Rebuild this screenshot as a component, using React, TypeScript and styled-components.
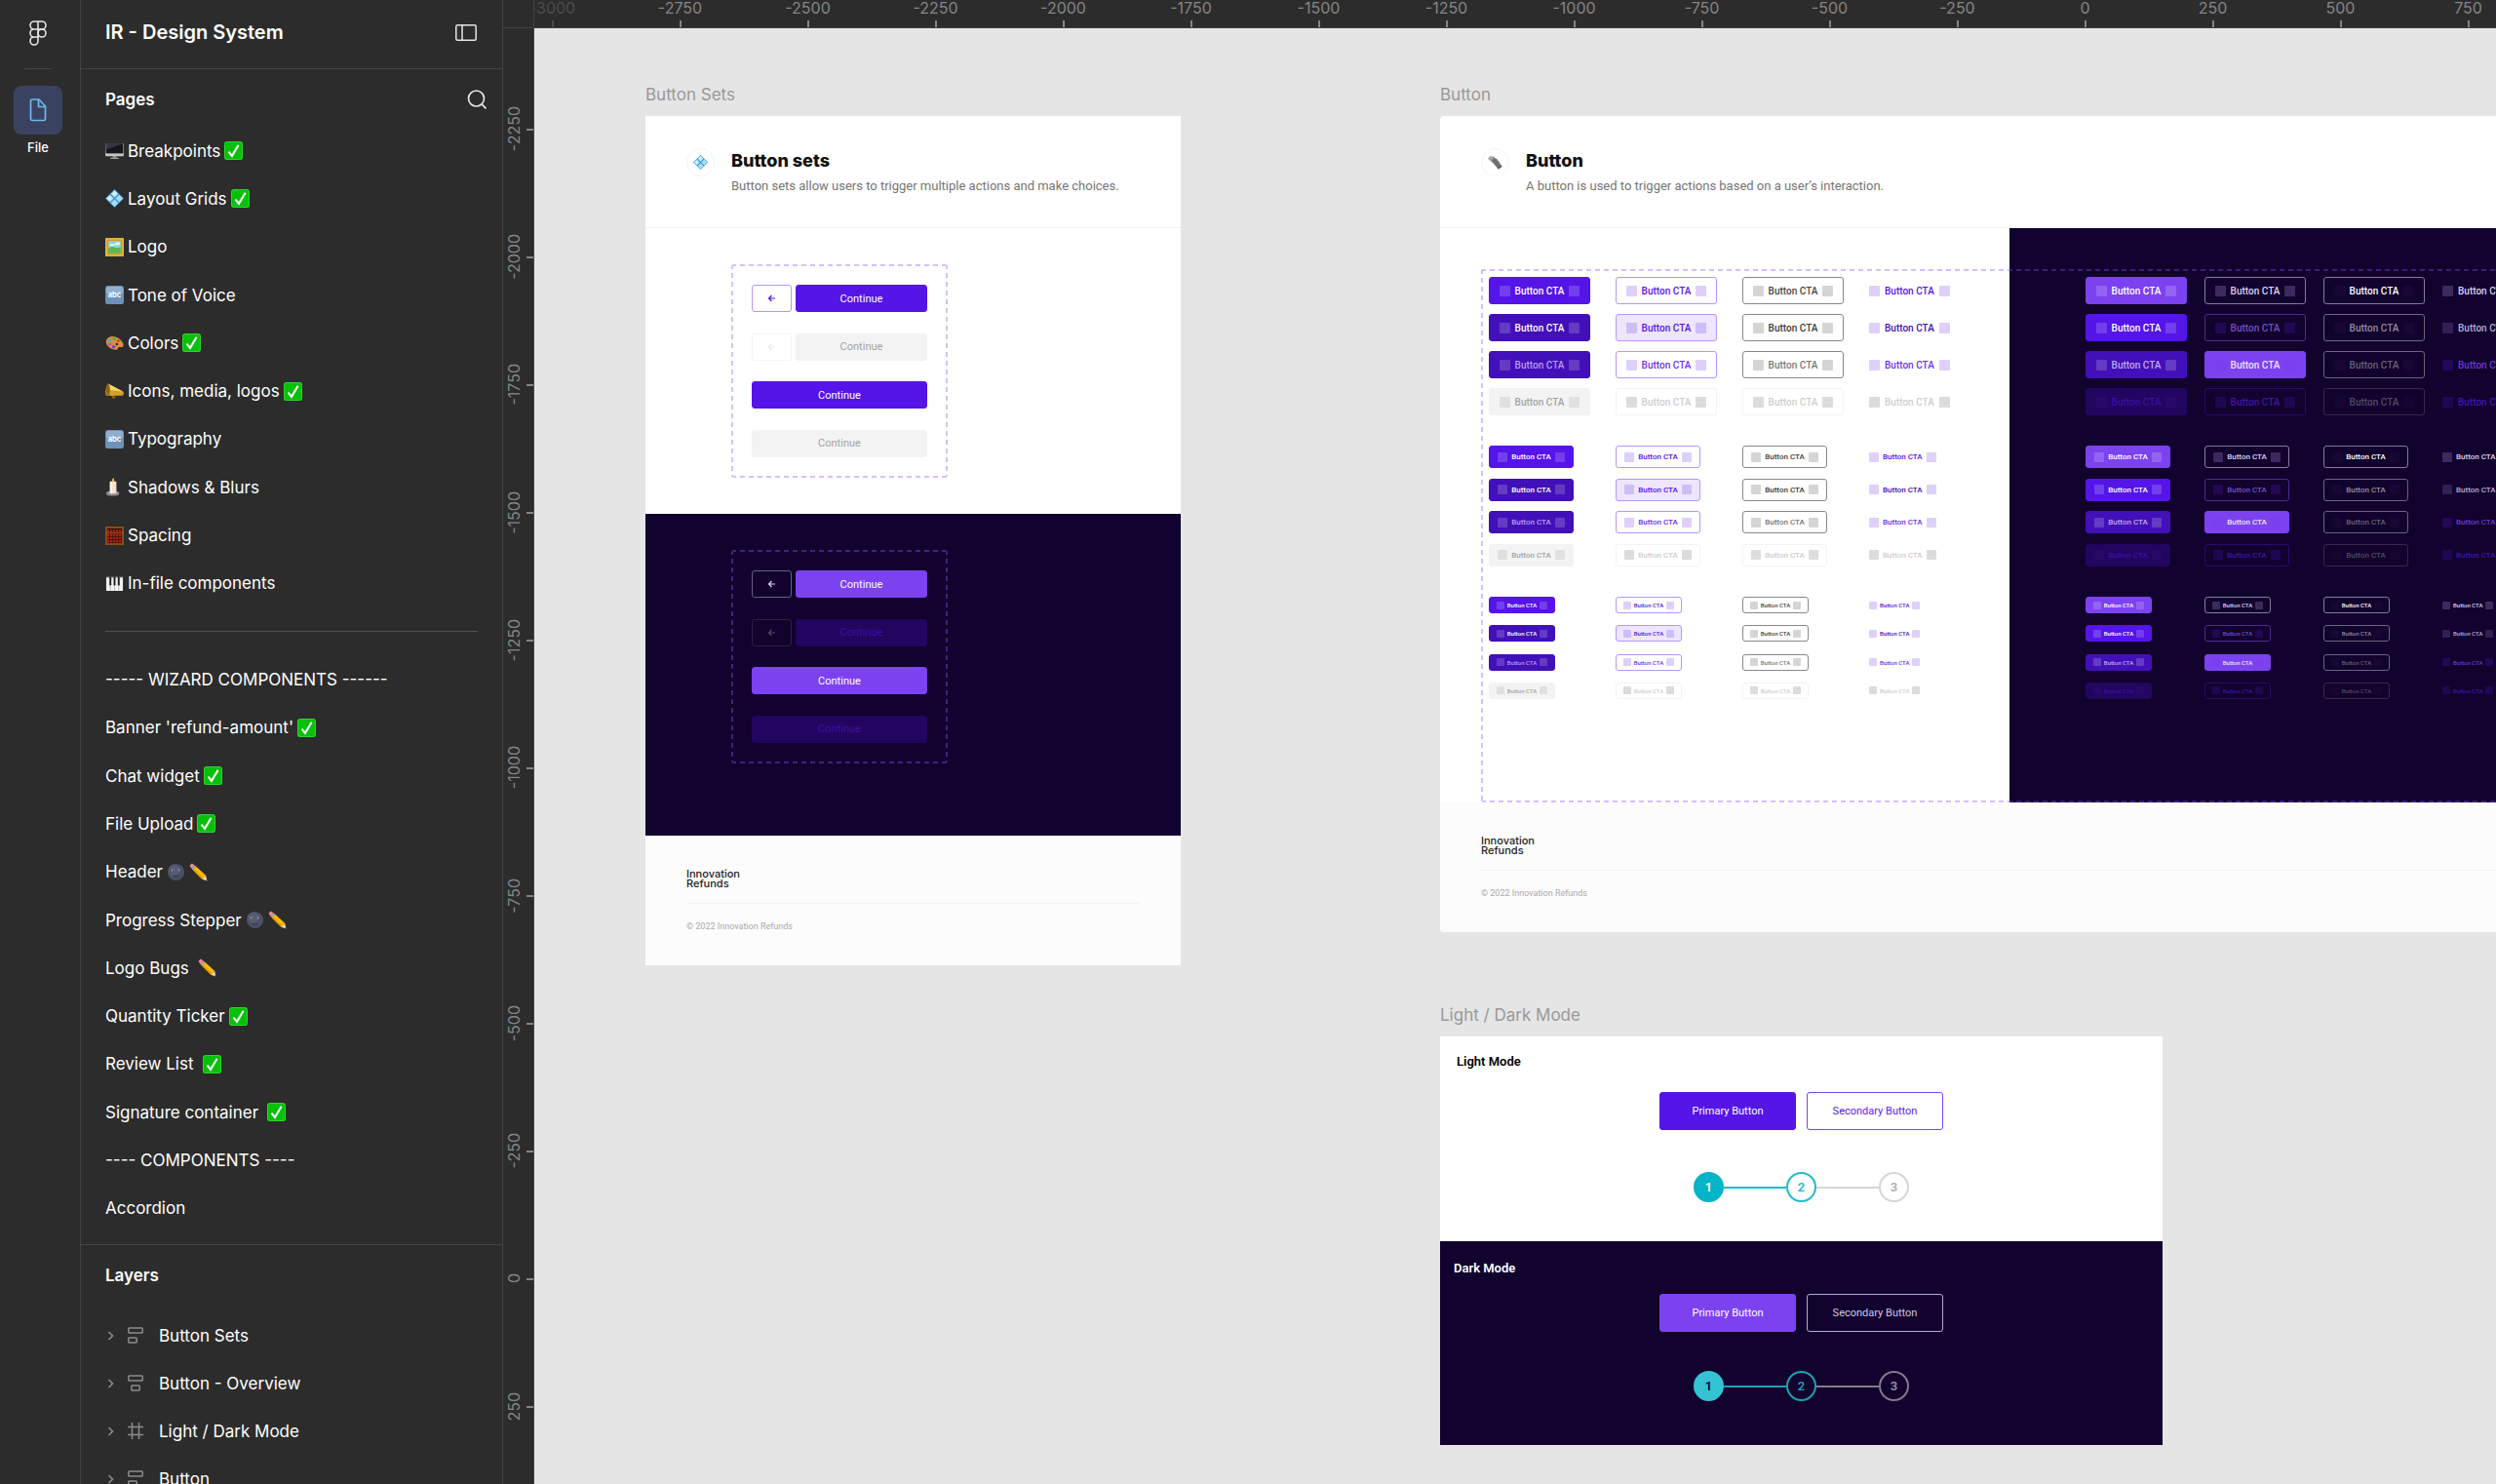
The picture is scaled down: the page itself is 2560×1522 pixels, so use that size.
import React from "react";
import styled, { createGlobalStyle, css } from "styled-components";

const ui = '"Inter", "Noto Sans", sans-serif';
const doc = '"Roboto", "Noto Sans", sans-serif';

const c = {
  panel: "#2c2c2c",
  line: "#434343",
  canvas: "#e5e5e5",
  night: "#11022e",
  violet: "#5514e8",
  deep: "#4210b8",
  bright: "#7c42f0",
};

const GlobalStyle = createGlobalStyle`
  *, *::before, *::after { box-sizing: border-box; }
  body { margin: 0; background: ${c.panel}; }
  button { font: inherit; color: inherit; background: none; border: 0; padding: 0; cursor: pointer; }
  h1, h2, h3, p, ul { margin: 0; padding: 0; }
  ul { list-style: none; }
`;

/* ---------- shell ---------- */

const Shell = styled.div`
  display: grid;
  grid-template-columns: 83px 433px minmax(0, 1fr);
  height: 100vh;
  overflow: hidden;
  background: ${c.panel};
  color: #fff;
  font-family: ${ui};
`;

const Rail = styled.nav`
  display: flex;
  flex-direction: column;
  align-items: center;
  padding: 20px 4px 0 0;
  border-right: 1px solid ${c.line};
`;

const RailRule = styled.span`
  width: 28px;
  height: 1px;
  margin: 22px 0 17px;
  background: ${c.line};
`;

const LogoButton = styled.button`
  display: flex;
  height: 28px;
  align-items: center;
`;

const RailTab = styled.button`
  display: flex;
  flex-direction: column;
  align-items: center;
  gap: 4px;
  font-size: 13px;
  font-weight: 500;
  line-height: 18px;
`;

const RailTile = styled.span`
  display: grid;
  place-items: center;
  width: 50px;
  height: 50px;
  border-radius: 8px;
  background: #394360;
`;

const Side = styled.aside`
  display: flex;
  flex-direction: column;
  min-height: 0;
  border-right: 1px solid ${c.line};
`;

const SideHeader = styled.header`
  display: flex;
  flex: none;
  align-items: center;
  justify-content: space-between;
  height: 71px;
  padding: 0 26px 4px 25px;
  border-bottom: 1px solid ${c.line};
`;

const FileName = styled.h1`
  font-size: 20px;
  font-weight: 600;
  line-height: 28px;
`;

const IconButton = styled.button`
  display: flex;
`;

const PagesPane = styled.section`
  display: flex;
  flex: none;
  flex-direction: column;
  height: 1206px;
  padding: 15px 25px 12px;
  border-bottom: 1px solid ${c.line};
`;

const PaneHead = styled.div`
  display: flex;
  flex: none;
  align-items: center;
  justify-content: space-between;
  height: 32px;
  margin-right: -9px;
  margin-bottom: 12px;
`;

const PaneTitle = styled.h2`
  font-size: 17px;
  font-weight: 600;
  line-height: 24px;
`;

const PageList = styled.ul`
  display: grid;
  flex: 1;
  grid-auto-rows: 1fr;
`;

const PageItem = styled.li`
  display: flex;
  align-items: center;
`;

const PageLink = styled.button`
  display: flex;
  flex: 1;
  align-items: center;
  gap: 4px;
  font-size: 17px;
  line-height: 24px;
  text-align: left;
  white-space: nowrap;
`;

const Marks = styled.span<{ $wide?: boolean }>`
  display: flex;
  gap: 4px;
  margin-left: ${(p) => (p.$wide ? "5px" : "0")};
`;

const PageRule = styled.hr`
  flex: 1;
  height: 1px;
  margin: 0;
  border: 0;
  background: #505050;
`;

const LayersPane = styled.section`
  flex: 1;
  min-height: 0;
  overflow: hidden;
  padding: 15px 25px 0;
`;

const LayerList = styled.ul`
  margin-top: 21px;
`;

const LayerRow = styled.button`
  display: flex;
  align-items: center;
  width: 100%;
  height: 49px;
  font-size: 17px;
  line-height: 24px;
`;

const LayerIcons = styled.span`
  display: flex;
  align-items: center;
  gap: 14px;
  width: 55px;
  padding-left: 2px;
  color: #8c8c8c;
`;

/* ---------- rulers ---------- */

const Work = styled.main`
  display: grid;
  grid-template-columns: 32px minmax(0, 1fr);
  grid-template-rows: 29px minmax(0, 1fr);
  min-width: 0;
  min-height: 0;
`;

const Corner = styled.div`
  border-right: 1px solid ${c.line};
  border-bottom: 1px solid ${c.line};
`;

const TopRuler = styled.div`
  display: flex;
  overflow: hidden;
  border-bottom: 1px solid ${c.line};
  color: #858585;
  font-size: 16px;
  line-height: 16px;
`;

const TopMark = styled.span<{ $dim?: boolean }>`
  display: flex;
  flex: none;
  flex-direction: column;
  align-items: center;
  justify-content: space-between;
  width: 131px;
  opacity: ${(p) => (p.$dim ? 0.35 : 1)};
  &:first-child { margin-left: -47px; }
  &::after { content: ""; width: 2px; height: 7px; background: #858585; }
`;

const SideRuler = styled.div`
  display: flex;
  flex-direction: column;
  overflow: hidden;
  padding-top: 38px;
  border-right: 1px solid ${c.line};
  color: #858585;
  font-size: 16px;
  line-height: 22px;
`;

const SideMark = styled.span`
  display: flex;
  flex: none;
  align-items: center;
  justify-content: space-between;
  height: 131px;
  &::after { content: ""; width: 7px; height: 2px; background: #858585; }
`;

const Upright = styled.span`
  writing-mode: vertical-rl;
  rotate: 180deg;
`;

/* ---------- canvas ---------- */

const Canvas = styled.div`
  position: relative;
  overflow: hidden;
  background: ${c.canvas};
  color: #111;
  font-family: ${doc};
`;

const Placed = styled.section<{ $x: number; $y: number; $w: number }>`
  position: absolute;
  left: ${(p) => p.$x}px;
  top: ${(p) => p.$y}px;
  width: ${(p) => p.$w}px;
`;

const BoardLabel = styled.h2`
  margin-bottom: 10px;
  color: #999;
  font-family: ${ui};
  font-size: 17px;
  font-weight: 400;
  line-height: 24px;
`;

const Board = styled.div<{ $round?: boolean }>`
  overflow: hidden;
  background: #fff;
  border-radius: ${(p) => (p.$round ? "4px" : "0")};
`;

const BoardHead = styled.header`
  display: flex;
  gap: 17px;
  height: 115px;
  padding: 33px 42px 0;
  border-bottom: 1px solid #f0f0f0;
`;

const Badge = styled.span`
  display: grid;
  place-items: center;
  width: 29px;
  height: 29px;
  border: 1px solid #f4f4f4;
  border-radius: 50%;
`;

const BoardTitle = styled.h3`
  font-family: ${ui};
  font-size: 18px;
  font-weight: 800;
  line-height: 26px;
`;

const BoardText = styled.p`
  margin-top: 3px;
  color: #757575;
  font-size: 13px;
  line-height: 20px;
`;

const Foot = styled.footer`
  height: 133px;
  padding: 34px 42px 0;
  background: #fcfcfc;
`;

const FootLogo = styled.p`
  width: 60px;
  padding-bottom: 15px;
  color: #222;
  font-family: ${ui};
  font-size: 11px;
  font-weight: 500;
  line-height: 10px;
`;

const FootNote = styled.p`
  padding-top: 15px;
  border-top: 1px solid #f3f3f3;
  color: #aaa;
  font-size: 9px;
  line-height: 16px;
`;

/* Long dashes, two pixels thick, along all four edges. */
const dashes = (color: string) => css`
  border-radius: 3px;
  background-image:
    repeating-linear-gradient(90deg, ${color} 0 5px, transparent 5px 9px),
    repeating-linear-gradient(90deg, ${color} 0 5px, transparent 5px 9px),
    repeating-linear-gradient(180deg, ${color} 0 5px, transparent 5px 9px),
    repeating-linear-gradient(180deg, ${color} 0 5px, transparent 5px 9px);
  background-position: 0 0, 0 100%, 0 0, 100% 0;
  background-size: 100% 2px, 100% 2px, 2px 100%, 2px 100%;
  background-repeat: no-repeat;
`;

/* ---------- button sets ---------- */

const SetArea = styled.div<{ $dark?: boolean }>`
  height: ${(p) => (p.$dark ? 330 : 293)}px;
  padding: 37px 0 0 88px;
  background: ${(p) => (p.$dark ? c.night : "#fff")};
`;

const SetBox = styled.div<{ $dark?: boolean }>`
  display: flex;
  flex-direction: column;
  justify-content: space-between;
  width: 222px;
  height: 219px;
  padding: 21px;
  ${(p) => dashes(p.$dark ? "#42217f" : "#d6c0fa")}
`;

const SetRow = styled.div`
  display: flex;
  gap: 4px;
`;

type Skin = { bg?: string; line?: string; ink: string; chip?: string };

const skin = css<{ $skin: Skin }>`
  display: flex;
  align-items: center;
  justify-content: center;
  background: ${(p) => p.$skin.bg ?? "transparent"};
  border: 1px solid ${(p) => p.$skin.line ?? p.$skin.bg ?? "transparent"};
  border-radius: 3px;
  color: ${(p) => p.$skin.ink};
  white-space: nowrap;
`;

const BackButton = styled.button<{ $skin: Skin }>`
  && { ${skin} }
  width: 41px;
  height: 28px;
`;

const ContinueButton = styled.button<{ $skin: Skin }>`
  && { ${skin} }
  flex: 1;
  height: 28px;
  font-size: 11px;
`;

/* ---------- CTA matrix ---------- */

type Size = "l" | "m" | "s";

const Stage = styled.div`
  position: relative;
  display: grid;
  grid-template-columns: 584px 1fr;
  height: 589px;
`;

const StageFrame = styled.span`
  position: absolute;
  inset: 42px 42px 0;
  ${dashes("rgba(138, 77, 250, 0.36)")}
  pointer-events: none;
`;

const Half = styled.div<{ $dark?: boolean }>`
  display: flex;
  flex-direction: column;
  gap: 31px;
  padding: 50px 0 0 ${(p) => (p.$dark ? 78 : 50)}px;
  background: ${(p) => (p.$dark ? c.night : "#fff")};
`;

const groupHeight = { l: 142, m: 124, s: 105 };

const Group = styled.div<{ $size: Size; $pitch: number }>`
  display: grid;
  grid-template-columns: repeat(4, ${(p) => p.$pitch}px);
  align-content: space-between;
  justify-items: start;
  height: ${(p) => groupHeight[p.$size]}px;
`;

const metrics = {
  l: css`width: 104px; height: 28px; gap: 5px; font-size: 10px; --chip: 11px;`,
  m: css`width: 87px; height: 23px; gap: 4px; font-size: 8px; --chip: 10px;`,
  s: css`width: 68px; height: 17px; gap: 3px; font-size: 6px; --chip: 8px;`,
};

const Cta = styled.button<{ $skin: Skin; $size: Size; $bare?: boolean }>`
  && { ${skin} }
  && { ${(p) => metrics[p.$size]} }
  font-weight: 500;
  ${(p) => p.$bare && css`&& { width: auto; border: 0; }`}
`;

const Chip = styled.span<{ $fill: string }>`
  width: var(--chip);
  height: var(--chip);
  border-radius: 1px;
  background: ${(p) => p.$fill};
`;

/* ---------- light / dark ---------- */

const Mode = styled.div<{ $dark?: boolean }>`
  display: flex;
  flex-direction: column;
  align-items: center;
  height: ${(p) => (p.$dark ? 209 : 210)}px;
  padding-top: ${(p) => (p.$dark ? 18 : 16)}px;
  background: ${(p) => (p.$dark ? c.night : "#fff")};
`;

const ModeTitle = styled.h3<{ $dark?: boolean }>`
  align-self: flex-start;
  padding-left: ${(p) => (p.$dark ? 14 : 17)}px;
  margin-bottom: ${(p) => (p.$dark ? 16 : 21)}px;
  color: ${(p) => (p.$dark ? "#fff" : "#000")};
  font-size: 13px;
  font-weight: 600;
  line-height: 20px;
`;

const ModeButtons = styled.div<{ $dark?: boolean }>`
  display: grid;
  grid-template-columns: 140px 140px;
  gap: 11px;
  margin-bottom: ${(p) => (p.$dark ? 40 : 43)}px;
`;

const ModeButton = styled.button<{ $skin: Skin }>`
  && { ${skin} }
  height: 39px;
  font-size: 11px;
`;

const Stepper = styled.div`
  display: flex;
  align-items: center;
`;

const Step = styled.span<{ $fill?: string; $line: string; $ink: string }>`
  display: grid;
  place-items: center;
  width: 31px;
  height: 31px;
  border: 2px solid ${(p) => p.$line};
  border-radius: 50%;
  background: ${(p) => p.$fill ?? "transparent"};
  color: ${(p) => p.$ink};
  font-size: 13px;
  font-weight: 600;
`;

const Link = styled.span<{ $line: string }>`
  width: 64px;
  height: 2px;
  background: ${(p) => p.$line};
`;

/* ---------- pictograms ---------- */

const art: Record<string, React.ReactNode> = {
  check: (
    <>
      <rect width="20" height="20" rx="3" fill="#07c008" />
      <rect x="0.5" y="0.5" width="19" height="19" rx="3" fill="none" stroke="#36d638" />
      <path d="M4.8 11.2 8.4 15.6 15.4 4" fill="none" stroke="#fff" strokeWidth="2.2" />
    </>
  ),
  desktop: (
    <>
      <path d="M8 15h4v3H8z" fill="#8b8b8b" />
      <path d="M5.5 17.600h9v1.400h-9z" fill="#9c9c9c" />
      <rect y="2" width="20" height="14" rx="1" fill="#c4c4c4" />
      <rect x="0.6" y="2.4" width="18.8" height="10.6" fill="#16181b" />
      <path d="M.6 2.4h18.8L.6 9z" fill="#34383d" />
    </>
  ),
  diamond: (
    <>
      <path d="M10 0 20 10 10 20 0 10z" fill="#3d96d6" />
      <path d="M10 1 14 5 10 9 6 5zM10 11l4 4-4 4-4-4zM5 6l4 4-4 4-4-4zM15 6l4 4-4 4-4-4z" fill="#a9dcf8" />
      <path d="M10 2 13 5 10 8 7 5zM5 7l2 3-2 3-3-3z" fill="#d5f0ff" />
    </>
  ),
  picture: (
    <>
      <rect width="20" height="20" rx="1" fill="#d99b1c" />
      <rect x="1" y="1" width="18" height="18" fill="none" stroke="#f4c94e" />
      <rect x="3.4" y="3.4" width="13.2" height="13.2" fill="#8fd3ee" />
      <path d="M3.4 11l4-2 5 2 4.200-1.500v7.100H3.400z" fill="#5cb84e" />
      <path d="M5 6.500h5v2.200H5zM11 5h4.500v2.500H11z" fill="#e8f8fc" />
    </>
  ),
  abc: (
    <>
      <rect width="20" height="20" rx="3" fill="#6d91b8" />
      <rect x="1" y="1" width="18" height="8" rx="2" fill="#90afcf" />
      <text x="10" y="12.500" textAnchor="middle" fontFamily="Inter, sans-serif" fontSize="8" fontWeight="700" fill="#fff">abc</text>
    </>
  ),
  palette: (
    <>
      <path d="M1 8C2 3 8 2 13 4.500c4 2 7 6 6.500 9-.4 2.200-2.600 1-4.500 1.200-2 .3-.8 3-3.600 3C6 17.700 0 13 1 8z" fill="#d98e3f" />
      <circle cx="5" cy="7.500" r="1.800" fill="#29b6d8" />
      <circle cx="9.500" cy="5.700" r="1.700" fill="#43b649" />
      <circle cx="4.800" cy="11.500" r="1.600" fill="#e33fae" />
      <circle cx="9" cy="14.500" r="1.900" fill="#7a3be0" />
      <circle cx="14" cy="8" r="1.500" fill="#e6352b" />
      <circle cx="12.500" cy="11.500" r="1.300" fill="#2c2c2c" />
    </>
  ),
  megaphone: (
    <>
      <path d="M6 13l2 5 3-1-1.500-4z" fill="#8a6413" />
      <path d="M3 1.500 19 10c1.500 1 1 4-1 4.500L1 14.500C-.5 11 .5 4 3 1.500z" fill="#d6a127" />
      <path d="M3 1.500 19 10 5 8.500z" fill="#f6d465" />
      <ellipse cx="3" cy="8" rx="2" ry="6.500" fill="#8a6413" />
    </>
  ),
  candle: (
    <>
      <path d="M1 17c0-2 3-3 7-3s7 1 7 3-3 2.500-7 2.500-7-.5-7-2.500z" fill="#8d8d92" />
      <rect x="5" y="4" width="7" height="13" rx="1" fill="#f5dfd0" />
      <rect x="5" y="4" width="2.500" height="13" fill="#fff4ea" />
      <path d="M8.500 0c1.600 2 1.600 3.800 0 4.600-1.600-.8-1.600-2.600 0-4.600z" fill="#f7c53b" />
    </>
  ),
  abacus: (
    <>
      <rect width="20" height="20" fill="#8e4d14" />
      <rect x="2" y="2" width="16" height="16" fill="#3c120d" />
      <path d="M2 5h16M2 9.300h16M2 12.500h16M2 16h16" stroke="#b71c12" strokeWidth="2.400" strokeDasharray="2.400 .8" />
      <path d="M0 7.200h20" stroke="#a8611c" strokeWidth="1" />
    </>
  ),
  piano: (
    <>
      <rect x="1" y="2" width="18" height="16" rx="1" fill="#f2f2f2" />
      <path d="M1 2h18v1.500H1z" fill="#555" />
      <path d="M4.500 3h2v9h-2zM9 3h2v9H9zM13.500 3h2v9h-2z" fill="#1a1a1a" />
      <path d="M5.500 12v6M10 12v6M14.500 12v6" stroke="#9a9a9a" strokeWidth=".6" />
    </>
  ),
  moon: (
    <>
      <circle cx="10" cy="10" r="9" fill="#4b5066" />
      <circle cx="8" cy="7.500" r="6" fill="#5d6278" opacity=".6" />
      <ellipse cx="6.500" cy="8" rx="1.500" ry="1.100" fill="#c3c6d4" />
      <ellipse cx="12.800" cy="8" rx="1.500" ry="1.100" fill="#c3c6d4" />
      <circle cx="6.800" cy="8.200" r=".8" fill="#14151c" />
      <circle cx="12.500" cy="8.200" r=".8" fill="#14151c" />
      <path d="M7 14.200q3 1 6 0" fill="none" stroke="#2b2e3b" strokeWidth="1" />
    </>
  ),
  pencil: (
    <>
      <path d="M.5 3 3 .5 6 2.500 2.600 6z" fill="#f08c90" />
      <path d="M2.600 6 6 2.500 7.600 4 4 7.500z" fill="#9fb0bd" />
      <path d="M4 7.500 7.600 4 18 13.500 14 17.500z" fill="#fbbd0b" />
      <path d="M4 7.500 5.200 6.300 15.300 16.200 14 17.500z" fill="#e29a06" />
      <path d="M14 17.500 18 13.500 19.500 19.500z" fill="#f3d7a8" />
      <path d="M18 18.800 19.100 17.900 19.500 19.500z" fill="#3b3430" />
    </>
  ),
  bolt: (
    <>
      <path d="M2 6 7 1.500 12 6 7 11z" fill="#77797e" />
      <path d="M3.500 1 8 4 4 8.500 0 5z" fill="#a5a7ac" />
      <path d="M6.500 9.500 12 5 19.500 15.500 14.500 19.500z" fill="#5c5e63" />
      <path d="M8.500 11 13 7M10.500 13.500 15 10M12.500 16 17 12.500" stroke="#a9abb0" strokeWidth="1" />
    </>
  ),
};

const Pictogram = ({ name, size = 19 }: { name: string; size?: number }) => (
  <svg width={size} height={size} viewBox="0 0 20 20" aria-hidden="true">
    {art[name]}
  </svg>
);

const FigmaLogo = () => (
  <svg width="20" height="28" viewBox="0 0 20 28" fill="none" stroke="#e6e6e6" strokeWidth="1.600" aria-hidden="true">
    <path d="M10 2H6a4 4 0 0 0 0 8h4zM10 2h4a4 4 0 0 1 0 8h-4zM10 10H6a4 4 0 0 0 0 8h4zM10 18H6a4 4 0 1 0 4 4z" />
    <circle cx="14" cy="14" r="4" />
  </svg>
);

const FileIcon = () => (
  <svg width="18" height="24" viewBox="0 0 18 24" fill="none" stroke="#6fb7f2" strokeWidth="1.700" strokeLinejoin="round" aria-hidden="true">
    <path d="M3.500 1H10l6.500 7v13a1.500 1.500 0 0 1-1.500 1.500H3A1.500 1.500 0 0 1 1.500 21V2.500A1.500 1.500 0 0 1 3 1z" />
    <path d="M9.500 1v7.500h7" />
  </svg>
);

const PanelIcon = () => (
  <svg width="22" height="17" viewBox="0 0 22 17" fill="none" stroke="#e6e6e6" strokeWidth="1.500" aria-hidden="true">
    <rect x=".8" y=".8" width="20.400" height="15.400" rx="1.500" />
    <path d="M7 1v15" />
  </svg>
);

const SearchIcon = () => (
  <svg width="20" height="20" viewBox="0 0 20 20" fill="none" stroke="#e6e6e6" strokeWidth="1.700" strokeLinecap="round" aria-hidden="true">
    <circle cx="9.500" cy="9" r="8" />
    <path d="m15.200 14.800 3.800 4" />
  </svg>
);

const Chevron = () => (
  <svg width="7" height="10" viewBox="0 0 7 10" fill="none" stroke="currentColor" strokeWidth="1.600" aria-hidden="true">
    <path d="m1.500 1 4 4-4 4" />
  </svg>
);

const LayerGlyph = ({ kind }: { kind: string }) => (
  <svg width="16" height="17" viewBox="0 0 16 17" fill="none" stroke="currentColor" strokeWidth="1.500" aria-hidden="true">
    {kind === "frame" ? (
      <path d="M4.500 0v17M11.500 0v17M0 4.500h16M0 12.500h16" />
    ) : (
      <>
        <rect x=".8" y="1" width="14.400" height="5" rx=".8" />
        <rect x={kind === "center" ? 3.8 : 0.8} y="11" width="8.400" height="5" rx=".8" />
      </>
    )}
  </svg>
);

const Arrow = () => (
  <svg width="9" height="8" viewBox="0 0 9 8" fill="none" stroke="currentColor" strokeWidth="1.200" aria-hidden="true">
    <path d="M8 4H1.500M4.500 1l-3 3 3 3" />
  </svg>
);

/* ---------- data ---------- */

type Page = { icon?: string; name: string; marks?: string[]; wide?: boolean; rule?: boolean };

const pages: Page[] = [
  { icon: "desktop", name: "Breakpoints", marks: ["check"] },
  { icon: "diamond", name: "Layout Grids", marks: ["check"] },
  { icon: "picture", name: "Logo" },
  { icon: "abc", name: "Tone of Voice" },
  { icon: "palette", name: "Colors", marks: ["check"] },
  { icon: "megaphone", name: "Icons, media, logos", marks: ["check"] },
  { icon: "abc", name: "Typography" },
  { icon: "candle", name: "Shadows & Blurs" },
  { icon: "abacus", name: "Spacing" },
  { icon: "piano", name: "In-file components" },
  { name: "rule", rule: true },
  { name: "----- WIZARD COMPONENTS ------" },
  { name: "Banner 'refund-amount'", marks: ["check"] },
  { name: "Chat widget", marks: ["check"] },
  { name: "File Upload", marks: ["check"] },
  { name: "Header", marks: ["moon", "pencil"] },
  { name: "Progress Stepper", marks: ["moon", "pencil"] },
  { name: "Logo Bugs", marks: ["pencil"], wide: true },
  { name: "Quantity Ticker", marks: ["check"] },
  { name: "Review List", marks: ["check"], wide: true },
  { name: "Signature container", marks: ["check"], wide: true },
  { name: "---- COMPONENTS ----" },
  { name: "Accordion" },
];

const layers = [
  { kind: "left", name: "Button Sets" },
  { kind: "center", name: "Button - Overview" },
  { kind: "frame", name: "Light / Dark Mode" },
  { kind: "left", name: "Button" },
];

const topMarks = Array.from({ length: 16 }, (_, i) => -3000 + i * 250);
const sideMarks = Array.from({ length: 11 }, (_, i) => -2250 + i * 250);

const veil = "rgba(255, 255, 255, 0.18)";

/* Each inner list is one row: primary, secondary, tertiary, text. */
const lightSkins: Skin[][] = [
  [
    { bg: c.violet, ink: "#fff", chip: veil },
    { line: "#b795fb", ink: c.violet, chip: "#dfd0fa" },
    { line: "#888", ink: "#444", chip: "#d5d5d5" },
    { ink: c.violet, chip: "#dfd0fa" },
  ],
  [
    { bg: c.deep, ink: "#fff", chip: veil },
    { bg: "#eee6fc", line: "#b795fb", ink: c.violet, chip: "#cfbdf7" },
    { line: "#888", ink: "#3a3a3a", chip: "#d5d5d5" },
    { ink: c.deep, chip: "#dfd0fa" },
  ],
  [
    { bg: c.deep, ink: "#b79df0", chip: veil },
    { line: "#b795fb", ink: "#6a33ea", chip: "#dfd0fa" },
    { line: "#888", ink: "#777", chip: "#d5d5d5" },
    { ink: "#6a33ea", chip: "#dfd0fa" },
  ],
  [
    { bg: "#f3f3f3", ink: "#a3a3a3", chip: "#e0e0e0" },
    { line: "#f3f3f3", ink: "#cecece", chip: "#dcdcdc" },
    { line: "#f3f3f3", ink: "#cecece", chip: "#dcdcdc" },
    { ink: "#cecece", chip: "#dcdcdc" },
  ],
];

const darkSkins: Skin[][] = [
  [
    { bg: c.bright, ink: "#fff", chip: veil },
    { line: "#857a9c", ink: "#ddd3f6", chip: "#3b2b5c" },
    { line: "#857a9c", ink: "#fff", chip: "#160733" },
    { ink: "#ddd3f6", chip: "#3b2b5c" },
  ],
  [
    { bg: c.violet, ink: "#fff", chip: veil },
    { line: "#4b2c92", ink: "#7551c6", chip: "#220853" },
    { line: "#6d647f", ink: "#948c9f", chip: "#160733" },
    { ink: "#b9adda", chip: "#2f1f52" },
  ],
  [
    { bg: c.deep, ink: "#c0a8f0", chip: veil },
    { bg: c.bright, ink: "#eee5ff", chip: "#7a40ee" },
    { line: "#6d647f", ink: "#696175", chip: "#160733" },
    { ink: "#6a3bd6", chip: "#20085a" },
  ],
  [
    { bg: "#22055f", ink: "#3c0fa6", chip: "#280968" },
    { line: "#2a0a6c", ink: "#4015a8", chip: "#1e0752" },
    { line: "#352a48", ink: "#544b62", chip: "#150631" },
    { ink: "#4015b4", chip: "#1e0752" },
  ],
];

const lightSet: Skin[] = [
  { line: "#b795fb", ink: c.violet },
  { bg: c.violet, ink: "#fff" },
  { line: "#f5f5f5", ink: "#ececec" },
  { bg: "#f3f3f3", ink: "#a3a3a3" },
];

const darkSet: Skin[] = [
  { line: "#6a5f84", ink: "#ddd3f6" },
  { bg: c.bright, ink: "#fff" },
  { line: "#2d2142", ink: "#544b62" },
  { bg: "#22055f", ink: "#3c0fa6" },
];

/* ---------- composed parts ---------- */

const ButtonSet = ({ skins, dark }: { skins: Skin[]; dark?: boolean }) => (
  <SetArea $dark={dark}>
    <SetBox $dark={dark}>
      <SetRow>
        <BackButton $skin={skins[0]} aria-label="Back"><Arrow /></BackButton>
        <ContinueButton $skin={skins[1]}>Continue</ContinueButton>
      </SetRow>
      <SetRow>
        <BackButton $skin={skins[2]} aria-label="Back"><Arrow /></BackButton>
        <ContinueButton $skin={skins[3]}>Continue</ContinueButton>
      </SetRow>
      <SetRow><ContinueButton $skin={skins[1]}>Continue</ContinueButton></SetRow>
      <SetRow><ContinueButton $skin={skins[3]}>Continue</ContinueButton></SetRow>
    </SetBox>
  </SetArea>
);

const Matrix = ({ skins, dark }: { skins: Skin[][]; dark?: boolean }) => (
  <Half $dark={dark}>
    {(["l", "m", "s"] as Size[]).map((size) => (
      <Group key={size} $size={size} $pitch={dark ? 122 : 130}>
        {skins.flatMap((row, r) =>
          row.map((s, col) => (
            <Cta key={`${r}-${col}`} $skin={s} $size={size} $bare={col === 3}>
              <Chip $fill={s.chip!} />
              Button CTA
              <Chip $fill={s.chip!} />
            </Cta>
          ))
        )}
      </Group>
    ))}
  </Half>
);

const Head = ({ icon, title, text }: { icon: string; title: string; text: string }) => (
  <BoardHead>
    <Badge><Pictogram name={icon} size={15} /></Badge>
    <div>
      <BoardTitle>{title}</BoardTitle>
      <BoardText>{text}</BoardText>
    </div>
  </BoardHead>
);

const BoardFoot = () => (
  <Foot>
    <FootLogo>Innovation Refunds</FootLogo>
    <FootNote>© 2022 Innovation Refunds</FootNote>
  </Foot>
);

const ModePanel = ({ dark }: { dark?: boolean }) => {
  const teal = dark ? "#33c3d3" : "#04b4c8";
  const tealLine = dark ? "#1f9fb5" : "#1fbccd";
  const idle = dark ? "#857a8c" : "#d6d6d6";
  return (
    <Mode $dark={dark}>
      <ModeTitle $dark={dark}>{dark ? "Dark Mode" : "Light Mode"}</ModeTitle>
      <ModeButtons $dark={dark}>
        <ModeButton $skin={{ bg: dark ? c.bright : c.violet, ink: "#fff" }}>Primary Button</ModeButton>
        <ModeButton $skin={dark ? { line: "#b5a8d6", ink: "#d2c6ee" } : { line: "#7a45f0", ink: "#5a1cea" }}>
          Secondary Button
        </ModeButton>
      </ModeButtons>
      <Stepper>
        <Step $fill={teal} $line={teal} $ink={dark ? c.night : "#fff"}>1</Step>
        <Link $line={tealLine} />
        <Step $line={tealLine} $ink={tealLine}>2</Step>
        <Link $line={idle} />
        <Step $line={idle} $ink={dark ? "#9a90a2" : "#b0b0b0"}>3</Step>
      </Stepper>
    </Mode>
  );
};

export default function App() {
  return (
    <>
      <GlobalStyle />
      <Shell>
        <Rail aria-label="Main">
          <LogoButton aria-label="Main menu"><FigmaLogo /></LogoButton>
          <RailRule />
          <RailTab>
            <RailTile><FileIcon /></RailTile>
            File
          </RailTab>
        </Rail>

        <Side>
          <SideHeader>
            <FileName>IR - Design System</FileName>
            <IconButton aria-label="Toggle panel"><PanelIcon /></IconButton>
          </SideHeader>
          <PagesPane>
            <PaneHead>
              <PaneTitle>Pages</PaneTitle>
              <IconButton aria-label="Search"><SearchIcon /></IconButton>
            </PaneHead>
            <PageList>
              {pages.map((p) => (
                <PageItem key={p.name}>
                  {p.rule ? (
                    <PageRule />
                  ) : (
                    <PageLink>
                      {p.icon && <Pictogram name={p.icon} />}
                      {p.name}
                      {p.marks && (
                        <Marks $wide={p.wide}>
                          {p.marks.map((m) => <Pictogram key={m} name={m} />)}
                        </Marks>
                      )}
                    </PageLink>
                  )}
                </PageItem>
              ))}
            </PageList>
          </PagesPane>
          <LayersPane>
            <PaneHead><PaneTitle>Layers</PaneTitle></PaneHead>
            <LayerList>
              {layers.map((l) => (
                <li key={l.name}>
                  <LayerRow>
                    <LayerIcons><Chevron /><LayerGlyph kind={l.kind} /></LayerIcons>
                    {l.name}
                  </LayerRow>
                </li>
              ))}
            </LayerList>
          </LayersPane>
        </Side>

        <Work>
          <Corner />
          <TopRuler>
            {topMarks.map((n, i) => <TopMark key={n} $dim={i === 0}>{n}</TopMark>)}
          </TopRuler>
          <SideRuler>
            {sideMarks.map((n) => <SideMark key={n}><Upright>{n}</Upright></SideMark>)}
          </SideRuler>
          <Canvas>
            <Placed $x={114} $y={56} $w={549}>
              <BoardLabel>Button Sets</BoardLabel>
              <Board>
                <Head
                  icon="diamond"
                  title="Button sets"
                  text="Button sets allow users to trigger multiple actions and make choices."
                />
                <ButtonSet skins={lightSet} />
                <ButtonSet skins={darkSet} dark />
                <BoardFoot />
              </Board>
            </Placed>

            <Placed $x={929} $y={56} $w={1170}>
              <BoardLabel>Button</BoardLabel>
              <Board $round>
                <Head icon="bolt" title="Button" text="A button is used to trigger actions based on a user’s interaction." />
                <Stage>
                  <Matrix skins={lightSkins} />
                  <Matrix skins={darkSkins} dark />
                  <StageFrame />
                </Stage>
                <BoardFoot />
              </Board>
            </Placed>

            <Placed $x={929} $y={1000} $w={741}>
              <BoardLabel>Light / Dark Mode</BoardLabel>
              <Board>
                <ModePanel />
                <ModePanel dark />
              </Board>
            </Placed>
          </Canvas>
        </Work>
      </Shell>
    </>
  );
}
